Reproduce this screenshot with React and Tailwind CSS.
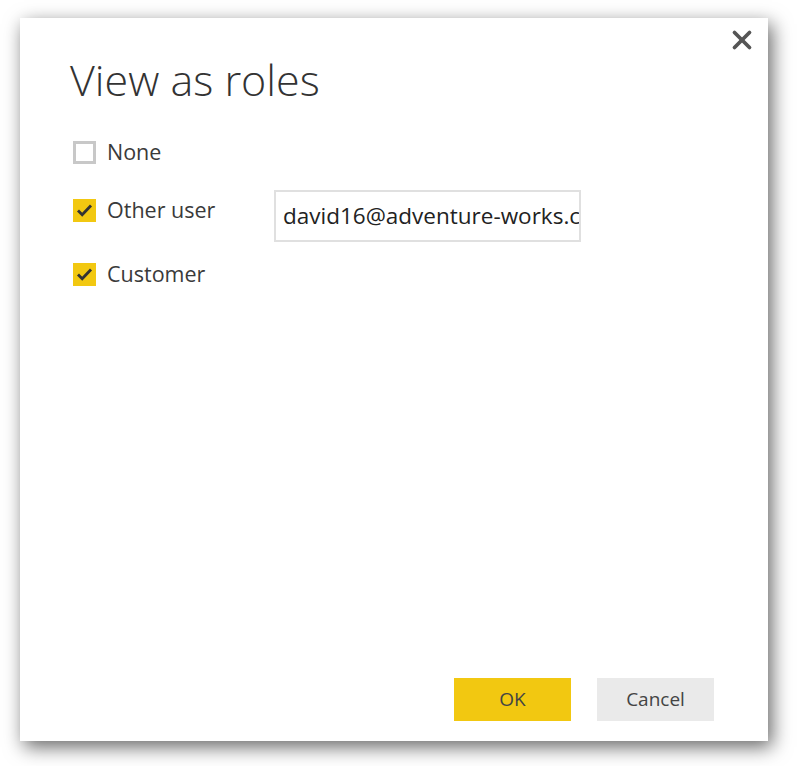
import { X } from 'lucide-react';

const font = { fontFamily: '"Open Sans", "Noto Sans", sans-serif' };

function CheckBox({ checked }) {
    if (!checked) {
        return <span className="block h-[23px] w-[23px] border-[3px] border-[#c8c8c8] bg-white" />;
    }
    return (
        <span className="flex h-[23px] w-[23px] items-center justify-center bg-[#f2c811]">
            <svg width="17" height="15" viewBox="0 0 17 15">
                <path d="M2 7.5 L6.2 11.8 L15 2.5" fill="none" stroke="#333" strokeWidth="2.8" />
            </svg>
        </span>
    );
}

function RoleRow({ label, checked, children }) {
    return (
        <div className="flex h-[23px] items-center">
            <CheckBox checked={checked} />
            <span className="ml-[11px] w-[167px] text-[21.5px] text-[#3a3a3a]">{label}</span>
            {children}
        </div>
    );
}

export default function App() {
    return (
        <div className="h-[766px] w-[797px] bg-white pl-[20px] pt-[18px]" style={font}>
            <div className="relative flex h-[723px] w-[748px] flex-col bg-white px-[50px] shadow-[4px_6px_18px_rgba(0,0,0,0.6)]">
                <button className="absolute right-[11px] top-[7px] text-[#555]">
                    <X size={30} strokeWidth={3} />
                </button>
                <h1 className="mt-[34px] text-[43px] font-light leading-[56px] text-[#333]">View as roles</h1>
                <div className="mt-[33px] flex flex-col pl-[3px]">
                    <RoleRow label="None" />
                    <div className="mt-[35px]">
                        <RoleRow label="Other user" checked>
                            <div className="mt-[10px] flex h-[52px] w-[307px] items-center overflow-hidden border-2 border-[#e0e0e0] px-[7px] text-[22.5px] whitespace-nowrap text-[#222]">
                                david16@adventure-works.c
                            </div>
                        </RoleRow>
                    </div>
                    <div className="mt-[41px]">
                        <RoleRow label="Customer" checked />
                    </div>
                </div>
                <div className="mt-auto mb-[20px] flex justify-end gap-[26px] pr-[4px]">
                    <button className="h-[43px] w-[117px] bg-[#f2c811] text-[19px] text-[#444]">OK</button>
                    <button className="h-[43px] w-[117px] bg-[#eaeaea] text-[19px] text-[#444]">Cancel</button>
                </div>
            </div>
        </div>
    );
}
